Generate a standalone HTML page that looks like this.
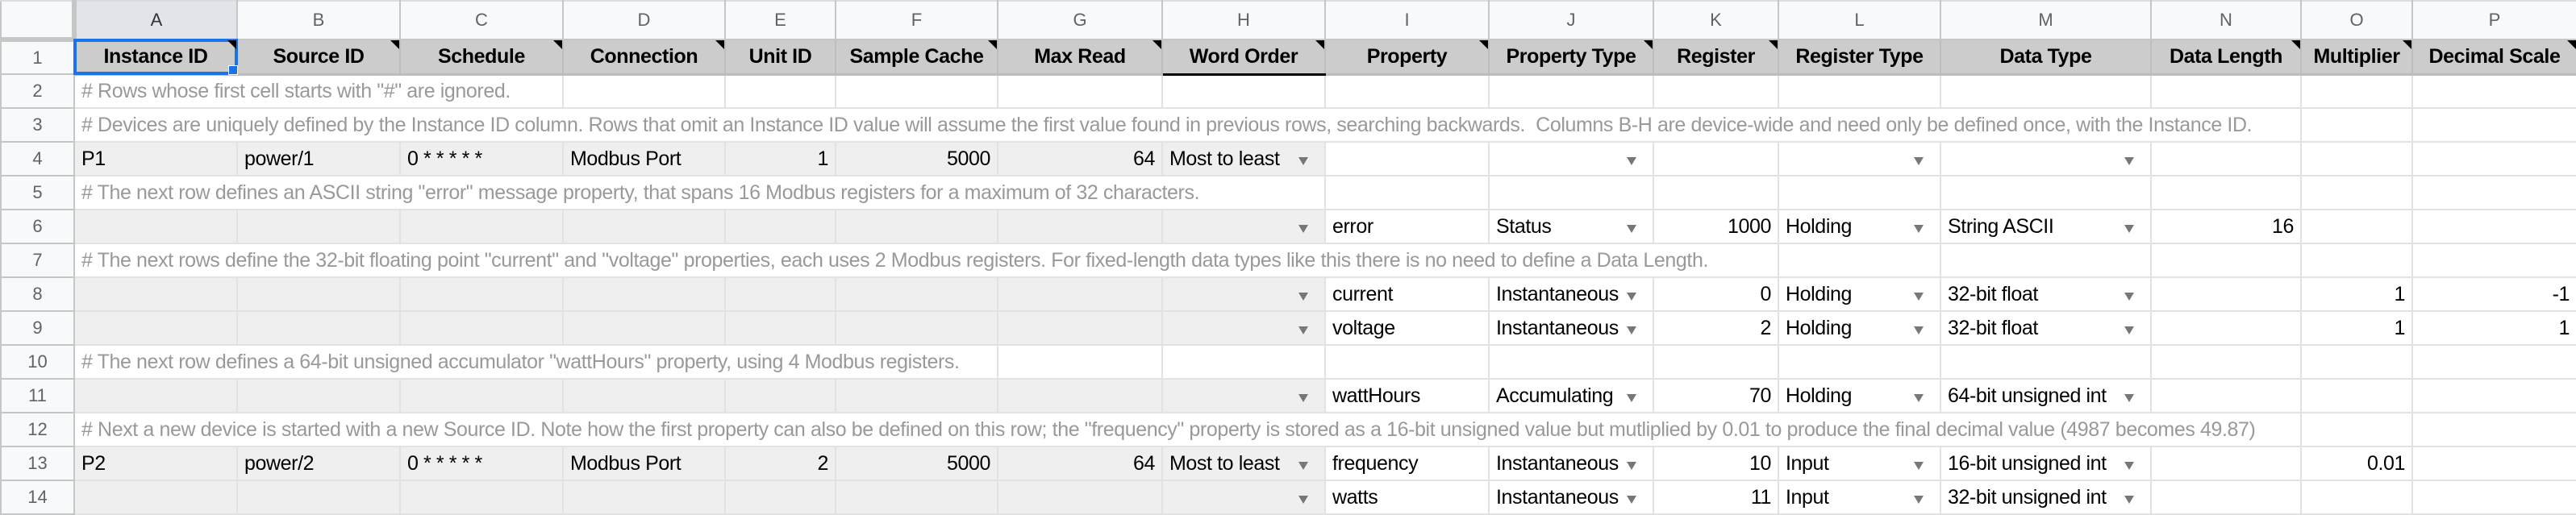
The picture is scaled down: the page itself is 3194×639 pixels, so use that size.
<!DOCTYPE html>
<html><head><meta charset="utf-8"><style>
body{margin:0;width:3194px;height:638px;overflow:hidden;background:#fff;font-family:"Liberation Sans",Arial,sans-serif;}
table{border-collapse:collapse;table-layout:fixed;width:3194px;}
td{height:42px;border:2px solid #e2e2e2;padding:0 8px;font-size:25px;letter-spacing:-0.4px;white-space:nowrap;overflow:hidden;position:relative;color:#000;box-sizing:border-box;}
tr.ch td{height:48px;background:#f8f9fa;color:#5f6368;text-align:center;font-size:22px;letter-spacing:0;border-color:#dadce0 #c4c7c5 #c4c7c5 #c4c7c5;}
tr.ch td.sel{background:#e1e5ea;color:#333;}
td.rh{background:#f8f9fa;color:#5f6368;text-align:center;font-size:22px;letter-spacing:0;border-color:#c4c7c5;padding:0;}
td.corner{background:#f8f9fa;border-right:6px solid #c4c7c5;border-bottom:6px solid #c4c7c5;}
tr.h td{height:43px;}
tr.h td:not(.rh){background:#cccccc;font-weight:bold;text-align:center;border-color:#bdbdbd;border-bottom:3px solid #bdbdbd;}
.g{background:#efefef;}
.c{color:#999;}
.r{text-align:right;}
.bl{border-left:2px solid #000 !important;}
.n::after{content:"";position:absolute;right:0;top:0;border-top:11px solid #000;border-left:11px solid transparent;}
.dd::after{content:"";position:absolute;right:20px;top:18px;border-top:10px solid #777;border-left:6px solid transparent;border-right:6px solid transparent;}
.selc{outline:4px solid #1a73e8;outline-offset:-3px;}
.handle{position:absolute;right:-2px;bottom:-2px;width:10px;height:10px;background:#1a73e8;border:1px solid #fff;}
</style></head><body>
<table>
<colgroup><col style="width:91px"><col style="width:202px"><col style="width:202px"><col style="width:202px"><col style="width:201px"><col style="width:137px"><col style="width:201px"><col style="width:204px"><col style="width:202px"><col style="width:203px"><col style="width:204px"><col style="width:155px"><col style="width:201px"><col style="width:261px"><col style="width:186px"><col style="width:138px"><col style="width:204px"></colgroup>
<tr class="ch"><td class="corner"></td><td class="sel">A</td><td>B</td><td>C</td><td>D</td><td>E</td><td>F</td><td>G</td><td>H</td><td>I</td><td>J</td><td>K</td><td>L</td><td>M</td><td>N</td><td>O</td><td>P</td></tr>
<tr class="h"><td class="rh">1</td><td class="n selc" style="overflow:visible">Instance ID<div class="handle"></div></td><td class="n">Source ID</td><td class="n">Schedule</td><td class="n">Connection</td><td>Unit ID</td><td class="n">Sample Cache</td><td class="n">Max Read</td><td class="n" style="border-left:2px solid #000;border-bottom:3px solid #000">Word Order</td><td class="n">Property</td><td class="n">Property Type</td><td class="n">Register</td><td>Register Type</td><td>Data Type</td><td class="n">Data Length</td><td class="n">Multiplier</td><td class="n">Decimal Scale</td></tr>
<tr><td class="rh">2</td><td colspan="3" class="c"># Rows whose first cell starts with "#" are ignored.</td><td></td><td></td><td></td><td></td><td></td><td></td><td></td><td></td><td></td><td></td><td></td><td></td><td></td></tr>
<tr><td class="rh">3</td><td colspan="14" class="c"># Devices are uniquely defined by the Instance ID column. Rows that omit an Instance ID value will assume the first value found in previous rows, searching backwards.&nbsp; Columns B-H are device-wide and need only be defined once, with the Instance ID.</td><td></td><td></td></tr>
<tr><td class="rh">4</td><td class="g">P1</td><td class="g">power/1</td><td class="g">0 * * * * *</td><td class="g">Modbus Port</td><td class="g r">1</td><td class="g r">5000</td><td class="g r">64</td><td class="g dd">Most to least</td><td class="bl"></td><td class="dd"></td><td></td><td class="dd"></td><td class="dd"></td><td></td><td></td><td></td></tr>
<tr><td class="rh">5</td><td colspan="8" class="c"># The next row defines an ASCII string "error" message property, that spans 16 Modbus registers for a maximum of 32 characters.</td><td class="bl"></td><td></td><td></td><td></td><td></td><td></td><td></td><td></td></tr>
<tr><td class="rh">6</td><td class="g"></td><td class="g"></td><td class="g"></td><td class="g"></td><td class="g"></td><td class="g"></td><td class="g"></td><td class="g dd"></td><td class="bl">error</td><td class="dd">Status</td><td class="r">1000</td><td class="dd">Holding</td><td class="dd">String ASCII</td><td class="r">16</td><td></td><td></td></tr>
<tr><td class="rh">7</td><td colspan="11" class="c"># The next rows define the 32-bit floating point "current" and "voltage" properties, each uses 2 Modbus registers. For fixed-length data types like this there is no need to define a Data Length.</td><td></td><td></td><td></td><td></td><td></td></tr>
<tr><td class="rh">8</td><td class="g"></td><td class="g"></td><td class="g"></td><td class="g"></td><td class="g"></td><td class="g"></td><td class="g"></td><td class="g dd"></td><td class="bl">current</td><td class="dd">Instantaneous</td><td class="r">0</td><td class="dd">Holding</td><td class="dd">32-bit float</td><td></td><td class="r">1</td><td class="r">-1</td></tr>
<tr><td class="rh">9</td><td class="g"></td><td class="g"></td><td class="g"></td><td class="g"></td><td class="g"></td><td class="g"></td><td class="g"></td><td class="g dd"></td><td class="bl">voltage</td><td class="dd">Instantaneous</td><td class="r">2</td><td class="dd">Holding</td><td class="dd">32-bit float</td><td></td><td class="r">1</td><td class="r">1</td></tr>
<tr><td class="rh">10</td><td colspan="6" class="c"># The next row defines a 64-bit unsigned accumulator "wattHours" property, using 4 Modbus registers.</td><td></td><td></td><td class="bl"></td><td></td><td></td><td></td><td></td><td></td><td></td><td></td></tr>
<tr><td class="rh">11</td><td class="g"></td><td class="g"></td><td class="g"></td><td class="g"></td><td class="g"></td><td class="g"></td><td class="g"></td><td class="g dd"></td><td class="bl">wattHours</td><td class="dd">Accumulating</td><td class="r">70</td><td class="dd">Holding</td><td class="dd">64-bit unsigned int</td><td></td><td></td><td></td></tr>
<tr><td class="rh">12</td><td colspan="14" class="c"># Next a new device is started with a new Source ID. Note how the first property can also be defined on this row; the "frequency" property is stored as a 16-bit unsigned value but mutliplied by 0.01 to produce the final decimal value (4987 becomes 49.87)</td><td></td><td></td></tr>
<tr><td class="rh">13</td><td class="g">P2</td><td class="g">power/2</td><td class="g">0 * * * * *</td><td class="g">Modbus Port</td><td class="g r">2</td><td class="g r">5000</td><td class="g r">64</td><td class="g dd">Most to least</td><td class="bl">frequency</td><td class="dd">Instantaneous</td><td class="r">10</td><td class="dd">Input</td><td class="dd">16-bit unsigned int</td><td></td><td class="r">0.01</td><td></td></tr>
<tr><td class="rh">14</td><td class="g"></td><td class="g"></td><td class="g"></td><td class="g"></td><td class="g"></td><td class="g"></td><td class="g"></td><td class="g dd"></td><td class="bl">watts</td><td class="dd">Instantaneous</td><td class="r">11</td><td class="dd">Input</td><td class="dd">32-bit unsigned int</td><td></td><td></td><td></td></tr>
</table>
</body></html>
